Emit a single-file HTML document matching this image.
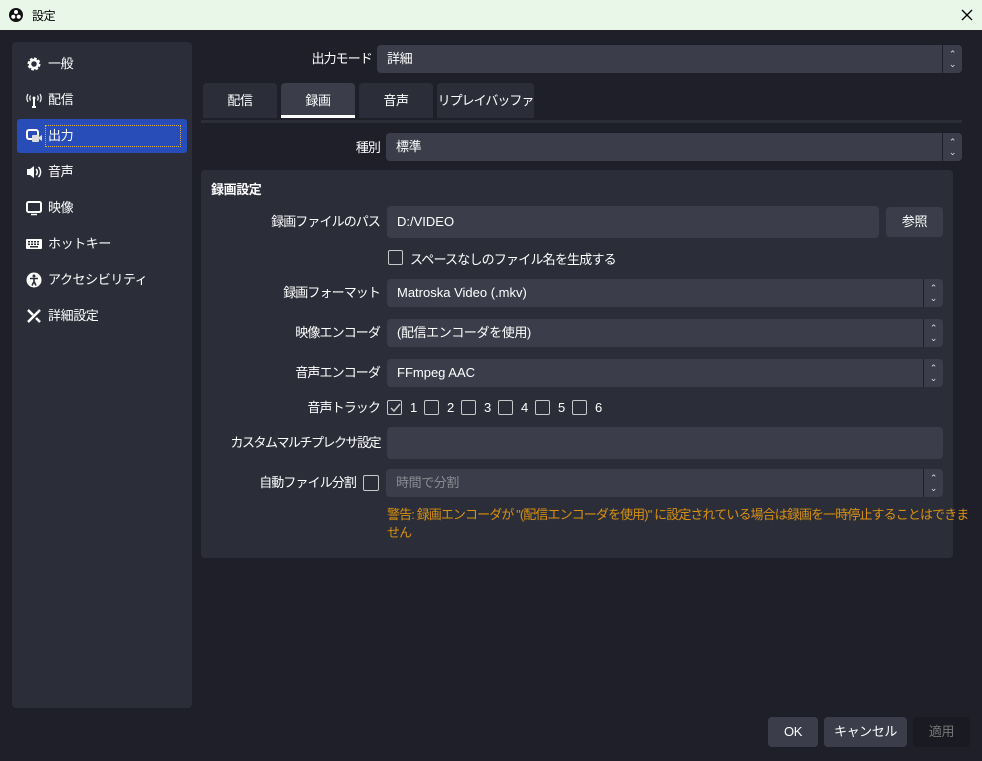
<!DOCTYPE html><html><head><meta charset="utf-8"><style>
*{box-sizing:border-box;margin:0;padding:0}
body{width:982px;height:761px;background:#1e1f28;font-family:"Liberation Sans","Noto Sans CJK JP",sans-serif;font-size:13px;color:#fff;position:relative;overflow:hidden;letter-spacing:-0.4px}
.a{position:absolute}
.title{left:0;top:0;width:982px;height:30px;background:#e9f7e9;color:#000;font-size:12px}
.side{left:12px;top:42px;width:180px;height:666px;background:#2b2e38;border-radius:4px}
.item{left:5px;width:170px;height:34px;line-height:34px;padding-left:31px;font-size:13px}
.item svg{position:absolute;left:9px;top:9px}
.sel{background:#284cb8;border-radius:3px}
.inp{background:#3b3e4a;border-radius:4px;height:28px;line-height:28px;padding-left:10px;white-space:nowrap}
.lab{text-align:right;width:200px;line-height:30px;white-space:nowrap;letter-spacing:-0.9px}
.tab{top:83px;height:35px;background:#2b2e38;border-radius:4px 4px 0 0;text-align:center;line-height:35px;white-space:nowrap}
.spin{position:absolute;right:0;top:0;width:20px;height:100%;border-left:1px solid #1e1f28;text-align:center;font-size:9px;line-height:10px;padding-top:4px;color:#ddd}
.cb{width:15px;height:15px;border:1.5px solid #c8c8c8;border-radius:2px}
.btn{top:717px;height:30px;background:#3b3e4a;border-radius:4px;text-align:center;line-height:30px}
.en{letter-spacing:0}
</style></head><body>
<div class="a title">
<svg class="a" style="left:9px;top:8px" width="14" height="14" viewBox="0 0 14 14"><circle cx="7" cy="7" r="7" fill="#111"/><circle cx="7" cy="4" r="2" fill="#fff"/><circle cx="4.3" cy="8.7" r="2" fill="#fff"/><circle cx="9.7" cy="8.7" r="2" fill="#fff"/></svg>
<span class="a" style="left:32px;top:7px">設定</span>
<svg class="a" style="left:961px;top:9px" width="12" height="12"><path d="M1 1L11 11M11 1L1 11" stroke="#000" stroke-width="1.3"/></svg>
</div>
<div class="a side">
<div class="a item" style="top:5px"><svg width="16" height="16" viewBox="0 0 16 16"><circle cx="8" cy="8" r="5" fill="none" stroke="#fff" stroke-width="3" stroke-dasharray="2.5 1.4"/><circle cx="8" cy="8" r="4" fill="none" stroke="#fff" stroke-width="2.5"/></svg>一般</div>
<div class="a item" style="top:41px"><svg width="16" height="16" viewBox="0 0 16 16"><path d="M8 7V15M6 15h4" stroke="#fff" stroke-width="2"/><circle cx="8" cy="6" r="1.5" fill="#fff"/><path d="M4.5 3.5a5 5 0 000 5M11.5 3.5a5 5 0 010 5M2 2a8 8 0 000 8M14 2a8 8 0 010 8" stroke="#fff" fill="none" stroke-width="1.2"/></svg>配信</div>
<div class="a item sel" style="top:77px"><svg width="16" height="16" viewBox="0 0 16 16"><rect x="1" y="2" width="11" height="9" rx="2" fill="none" stroke="#fff" stroke-width="2"/><rect x="6" y="7" width="7" height="7" rx="1" fill="#ddd"/><path d="M13 9l3-2v6l-3-2z" fill="#ddd"/></svg><span style="border:1px dotted #d9b24a;display:inline-block;height:22px;line-height:20px;position:absolute;left:28px;top:6px;width:136px;padding-left:2px">出力</span></div>
<div class="a item" style="top:113px"><svg width="16" height="16" viewBox="0 0 16 16"><path d="M1 5h3l4-3v12l-4-3H1z" fill="#fff"/><path d="M10 5a4 4 0 010 6M12.5 3a7 7 0 010 10" stroke="#fff" fill="none" stroke-width="1.5"/></svg>音声</div>
<div class="a item" style="top:149px"><svg width="16" height="16" viewBox="0 0 16 16"><rect x="1" y="2" width="14" height="10" rx="1.5" fill="none" stroke="#fff" stroke-width="2"/><path d="M5 14.5h6" stroke="#fff" stroke-width="1.5"/></svg>映像</div>
<div class="a item" style="top:185px"><svg width="16" height="16" viewBox="0 0 16 16"><rect x="0" y="3" width="16" height="10" rx="1" fill="#fff"/><g fill="#2b2e38"><rect x="2" y="5" width="2" height="1.5"/><rect x="5" y="5" width="2" height="1.5"/><rect x="8" y="5" width="2" height="1.5"/><rect x="11" y="5" width="2" height="1.5"/><rect x="2" y="7.5" width="2" height="1.5"/><rect x="5" y="7.5" width="2" height="1.5"/><rect x="8" y="7.5" width="2" height="1.5"/><rect x="11" y="7.5" width="2" height="1.5"/><rect x="4" y="10" width="8" height="1.5"/></g></svg>ホットキー</div>
<div class="a item" style="top:221px"><svg width="16" height="16" viewBox="0 0 16 16"><circle cx="8" cy="8" r="7.5" fill="#fff"/><circle cx="8" cy="4" r="1.5" fill="#2b2e38"/><path d="M4 6.5h8M8 6.5v3M8 9.5l-2 4M8 9.5l2 4" stroke="#2b2e38" stroke-width="1.6"/></svg>アクセシビリティ</div>
<div class="a item" style="top:257px"><svg width="16" height="16" viewBox="0 0 16 16"><path d="M2 14L14 2M2 2l5 5M10 10l4 4" stroke="#fff" stroke-width="2.5"/></svg>詳細設定</div>
</div>
<div class="a lab" style="left:172px;top:44px">出力モード</div>
<div class="a inp" style="left:377px;top:45px;width:585px">詳細<div class="spin">⌃<br>⌄</div></div>
<div class="a tab" style="left:203px;width:74px">配信</div>
<div class="a tab" style="left:281px;width:74px;background:#3b3e4a;border-bottom:3px solid #fff">録画</div>
<div class="a tab" style="left:359px;width:74px">音声</div>
<div class="a tab" style="left:437px;width:97px;letter-spacing:-1px">リプレイバッファ</div>
<div class="a" style="left:201px;top:120px;width:761px;height:3px;background:#2b2e38"></div>
<div class="a lab" style="left:180px;top:133px">種別</div>
<div class="a inp" style="left:386px;top:133px;width:576px">標準<div class="spin">⌃<br>⌄</div></div>
<div class="a" style="left:201px;top:170px;width:752px;height:388px;background:#2b2e38;border-radius:4px"></div>
<div class="a" style="left:211px;top:179px;font-weight:bold">録画設定</div>
<div class="a lab" style="left:180px;top:207px">録画ファイルのパス</div>
<div class="a inp en" style="left:387px;top:206px;width:492px;height:32px;line-height:32px">D:/VIDEO</div>
<div class="a inp" style="left:886px;top:207px;width:57px;height:30px;line-height:30px;padding:0;text-align:center">参照</div>
<div class="a cb" style="left:388px;top:250px"></div><div class="a" style="left:410px;top:249px;letter-spacing:-0.8px">スペースなしのファイル名を生成する</div>
<div class="a lab" style="left:180px;top:278px">録画フォーマット</div>
<div class="a inp en" style="left:387px;top:279px;width:556px">Matroska Video (.mkv)<div class="spin">⌃<br>⌄</div></div>
<div class="a lab" style="left:180px;top:318px">映像エンコーダ</div>
<div class="a inp" style="left:387px;top:319px;width:556px">(配信エンコーダを使用)<div class="spin">⌃<br>⌄</div></div>
<div class="a lab" style="left:180px;top:358px">音声エンコーダ</div>
<div class="a inp en" style="left:387px;top:359px;width:556px">FFmpeg AAC<div class="spin">⌃<br>⌄</div></div>
<div class="a lab" style="left:180px;top:393px">音声トラック</div>
<div class="a" style="left:387px;top:400px;height:16px;line-height:16px">
<span class="a cb" style="left:0"></span><svg class="a" style="left:2px;top:2px" width="12" height="12"><path d="M2 6l3 3 6-7" stroke="#c8c8c8" fill="none" stroke-width="1.5"/></svg><span class="a" style="left:23px">1</span>
<span class="a cb" style="left:37px"></span><span class="a" style="left:60px">2</span>
<span class="a cb" style="left:74px"></span><span class="a" style="left:97px">3</span>
<span class="a cb" style="left:111px"></span><span class="a" style="left:134px">4</span>
<span class="a cb" style="left:148px"></span><span class="a" style="left:171px">5</span>
<span class="a cb" style="left:185px"></span><span class="a" style="left:208px">6</span>
</div>
<div class="a lab" style="left:180px;top:428px;letter-spacing:-1.5px">カスタムマルチプレクサ設定</div>
<div class="a inp" style="left:387px;top:427px;width:556px;height:32px"></div>
<div class="a lab" style="left:156px;top:468px">自動ファイル分割</div>
<div class="a cb" style="left:363px;top:475px;width:16px;height:16px"></div>
<div class="a inp" style="left:386px;top:469px;width:557px;color:#8a8c94">時間で分割<div class="spin">⌃<br>⌄</div></div>
<div class="a" style="left:387px;top:506px;color:#d9910e;line-height:18px;letter-spacing:-0.9px;white-space:nowrap">警告: 録画エンコーダが "(配信エンコーダを使用)" に設定されている場合は録画を一時停止することはできま<br>せん</div>
<div class="a btn" style="left:768px;width:50px">OK</div>
<div class="a btn" style="left:824px;width:83px">キャンセル</div>
<div class="a btn" style="left:913px;width:57px;background:#1a1b22;color:#777">適用</div>
</body></html>
